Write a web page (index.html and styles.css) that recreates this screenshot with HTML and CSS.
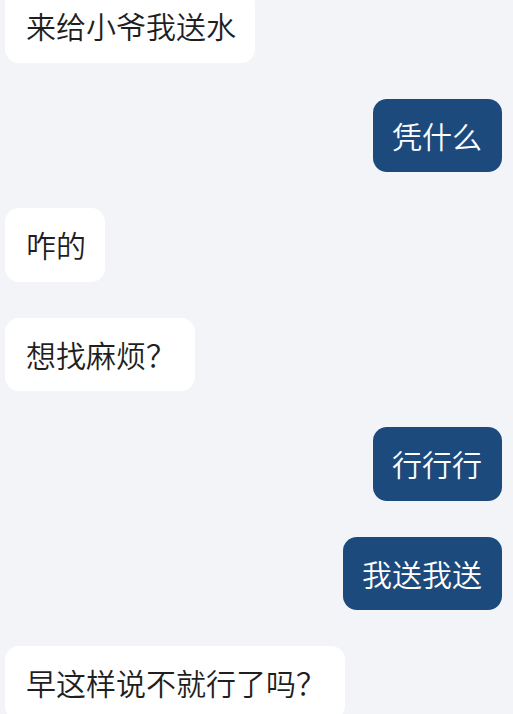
FILE: index.html
```html
<!DOCTYPE html>
<html lang="zh-CN">
<head>
<meta charset="utf-8">
<title>Chat</title>
<link rel="stylesheet" href="styles.css">
</head>
<body>
<div class="chat">
  <div class="msg in">来给小爷我送水</div>
  <div class="msg out">凭什么</div>
  <div class="msg in">咋的</div>
  <div class="msg in">想找麻烦？</div>
  <div class="msg out">行行行</div>
  <div class="msg out">我送我送</div>
  <div class="msg in">早这样说不就行了吗？</div>
</div>
</body>
</html>
```
FILE: styles.css
```css
html, body {
  margin: 0;
  padding: 0;
  background: #f3f4f8;
  overflow: hidden;
}
.chat {
  display: flex;
  flex-direction: column;
  align-items: flex-start;
  gap: 36px;
  margin-top: -11px;
  padding: 0 11px 0 5px;
  font-family: "Noto Sans CJK SC", "Noto Sans", sans-serif;
  font-size: 30px;
  font-weight: 350;
}
.msg {
  line-height: 73.5px;
  padding: 0 19px 0 21px;
  border-radius: 14px;
  white-space: nowrap;
}
.in {
  background: #ffffff;
  color: #1f1f1f;
}
.out {
  align-self: flex-end;
  background: #1c4a7d;
  color: #ffffff;
  padding: 0 20px 0 19px;
}
```
